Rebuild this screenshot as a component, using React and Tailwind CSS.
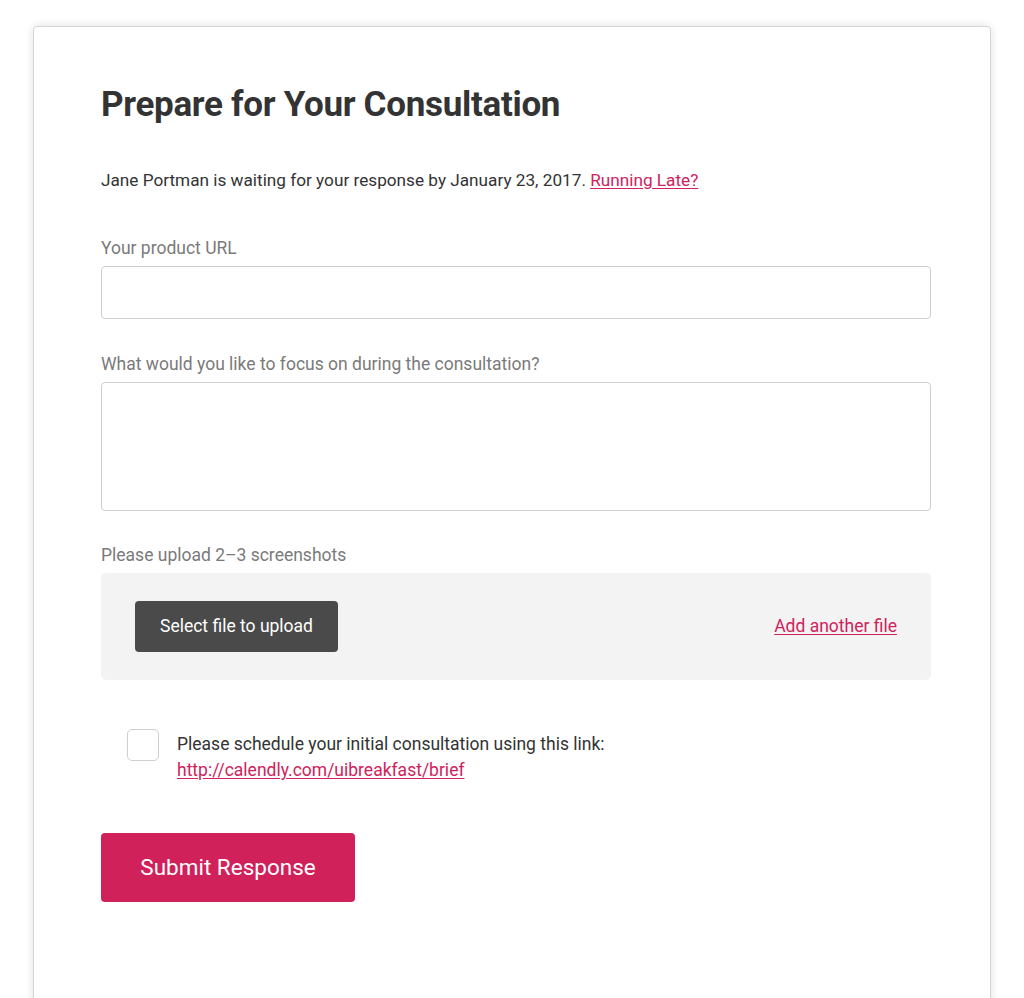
export default function App() {
  return (
    <div className="min-h-screen bg-white pt-[26px] px-[33px] font-['Roboto',sans-serif] overflow-hidden">
      <div className="h-[1000px] w-[958px] rounded-t-[4px] border border-[#d6d6d6] bg-white shadow-[0_0_10px_rgba(0,0,0,0.12)] pl-[67px] pr-[60px] pt-[56px]">
        <h1 className="text-[35px] leading-[44px] font-bold text-[#333] tracking-[-0.3px]">Prepare for Your Consultation</h1>

        <p className="mt-[41px] text-[17.2px] leading-[24px] text-[#333]">
          Jane Portman is waiting for your response by January 23, 2017.{' '}
          <a href="#" className="text-[#d0225c] underline underline-offset-2">Running Late?</a>
        </p>

        <label className="mt-[44px] block text-[17.5px] leading-[24px] text-[#7a7a7a]">Your product URL</label>
        <input type="text" className="mt-[6px] block h-[53px] w-[830px] rounded-[4px] border border-[#cfcfcf] bg-white px-3 outline-none" />

        <label className="mt-[33px] block text-[17.5px] leading-[24px] text-[#7a7a7a]">What would you like to focus on during the consultation?</label>
        <textarea className="mt-[6px] block h-[129px] w-[830px] resize-none rounded-[4px] border border-[#cfcfcf] bg-white px-3 py-2 outline-none" />

        <label className="mt-[32px] block text-[17.5px] leading-[24px] text-[#7a7a7a]">Please upload 2–3 screenshots</label>
        <div className="mt-[6px] flex h-[107px] w-[830px] items-center justify-between rounded-[5px] bg-[#f3f3f3] pl-[34px] pr-[34px]">
          <button className="h-[51px] w-[203px] rounded-[4px] bg-[#4a4a4a] text-[17.5px] text-white">Select file to upload</button>
          <a href="#" className="text-[17.5px] text-[#d0225c] underline underline-offset-2">Add another file</a>
        </div>

        <div className="mt-[49px] flex items-start pl-[26px]">
          <div className="h-[32px] w-[32px] shrink-0 rounded-[5px] border border-[#cfcfcf] bg-white" />
          <p className="ml-[18px] mt-[2px] text-[17.5px] leading-[26px] text-[#333]">
            Please schedule your initial consultation using this link:
            <br />
            <a href="#" className="text-[#d0225c] underline underline-offset-2">http://calendly.com/uibreakfast/brief</a>
          </p>
        </div>

        <button className="mt-[50px] h-[69px] w-[254px] rounded-[4px] bg-[#d0215b] text-[22.5px] text-white">Submit Response</button>
      </div>
    </div>
  );
}
